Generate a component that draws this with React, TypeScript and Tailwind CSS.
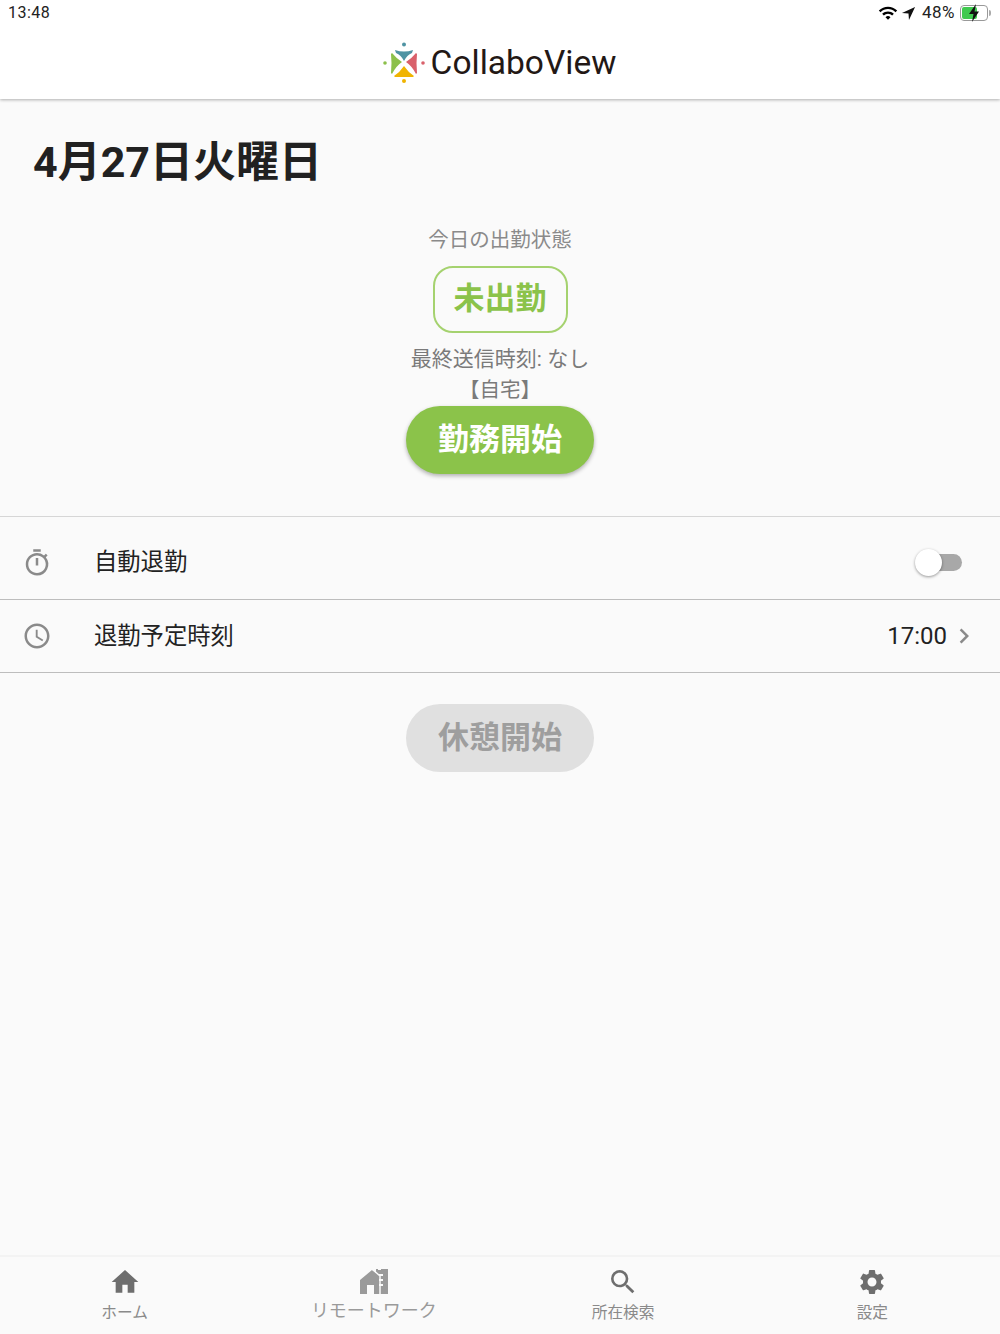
import { MdAccessTime, MdChevronRight, MdHome, MdOutlineTimer, MdSearch, MdSettings, MdWifi } from 'react-icons/md';
import type { ReactNode } from 'react';

const font = { fontFamily: 'Roboto, "Noto Sans CJK JP", sans-serif' };

function Logo() {
  return (
    <svg width="44" height="44" viewBox="0 0 44 44">
      <circle cx="22" cy="3.5" r="2" fill="#4f93a3" />
      <path d="M13 9 Q22 12 31 9 L30 12 Q25 14 22 20 Q19 14 14 12 Z" fill="#4f93a3" />
      <circle cx="3" cy="22" r="1.8" fill="#8cc04b" />
      <path d="M10 12 Q14 17 20 21 Q14 25 10 33 L9 32 Q10 22 9 13 Z" fill="#8cc04b" />
      <circle cx="41" cy="22" r="1.8" fill="#d9616b" />
      <path d="M34 12 Q30 17 24 21 Q30 25 34 33 L35 32 Q34 22 35 13 Z" fill="#d9616b" />
      <circle cx="22" cy="40" r="2" fill="#f0b400" />
      <path d="M22 25 Q26 31 32 35 L31 36 L13 36 L12 35 Q18 31 22 25 Z" fill="#f0b400" />
    </svg>
  );
}

function StatusBar() {
  return (
    <div className="flex h-[26px] items-center justify-between pl-2 pr-[9px] text-[16px] text-[#222]">
      <span className="tracking-[0.5px]">13:48</span>
      <div className="flex items-center">
        <MdWifi size={20} className="text-black" />
        <svg width="15" height="15" viewBox="0 0 16 16" className="ml-[3px]">
          <path d="M15 1 L1 7.5 L8 8 L8.5 15 Z" fill="#111" />
        </svg>
        <span className="ml-[6px] text-[17px] tracking-[0.5px]">48%</span>
        <div className="relative ml-[5px] h-[16px] w-[28px] rounded-[4px] border border-[#999] p-[1px]">
          <div className="h-full w-[15px] rounded-[2px] bg-[#3fc94f]" />
          <svg width="14" height="18" viewBox="0 0 14 18" className="absolute left-[6px] top-[-2px]">
            <path d="M9 0 L2 10 L6.5 10 L5 18 L12 7.5 L7.5 7.5 Z" fill="#111" />
          </svg>
        </div>
        <div className="ml-[1px] h-[6px] w-[2px] rounded-r-sm bg-[#aaa]" />
      </div>
    </div>
  );
}

function Row({ icon, label, children, last }: { icon: ReactNode; label: string; children?: ReactNode; last?: boolean }) {
  return (
    <div className={`flex items-center border-b border-[#bdbdbd] pl-[22px] ${last ? 'h-[73px]' : 'h-[83px] pt-[9px]'}`}>
      <div className="flex w-[72px] text-[#8a8a8a]">{icon}</div>
      <span className="text-[23.3px] text-[#222]">{label}</span>
      <div className="ml-auto flex items-center">{children}</div>
    </div>
  );
}

function NavItem({ icon, label }: { icon: ReactNode; label: string }) {
  return (
    <div className="flex flex-col items-center pt-[10px]">
      <div className="flex h-[30px] items-center text-[#6e6e6e]">{icon}</div>
      <span className="mt-[5px] text-[15.7px] leading-[22px] text-[#8a8a8a]">{label}</span>
    </div>
  );
}

export default function App() {
  return (
    <div style={font} className="flex h-[1334px] w-[1000px] flex-col bg-[#fafafa]">
      <header className="relative z-10 h-[99px] bg-white shadow-[0_1px_3px_rgba(0,0,0,0.3)]">
        <StatusBar />
        <div className="flex h-[73px] items-center justify-center pr-[2px]">
          <Logo />
          <span className="ml-[5px] text-[33.5px] leading-[74px] text-[#231815]">CollaboView</span>
        </div>
      </header>

      <main className="flex-1">
        <h1 className="pl-[33px] pt-[37px] text-[43px] font-bold leading-[52px] text-[#212121]">4月27日火曜日</h1>

        <div className="flex flex-col items-center pt-[37px]">
          <p className="text-[20.5px] leading-[30px] text-[#8a8a8a]">今日の出勤状態</p>
          <div className="mt-[11px] flex h-[67px] w-[135px] items-center justify-center rounded-[20px] border-2 border-[#a5d26f] text-[31px] font-bold text-[#8bc34a]">
            未出勤
          </div>
          <p className="mt-[11px] text-[21px] leading-[30px] text-[#7a7a7a]">最終送信時刻: なし</p>
          <p className="mt-[1px] text-[20.5px] leading-[30px] text-[#7a7a7a]">【自宅】</p>
          <div className="mt-[1px] flex h-[68px] w-[188px] items-center justify-center rounded-full bg-[#8bc34a] text-[31px] font-bold text-white shadow-[0_2px_4px_rgba(0,0,0,0.3)]">
            勤務開始
          </div>
        </div>

        <div className="mt-[42px] border-t border-[#d6d6d6]">
          <Row icon={<MdOutlineTimer size={30} />} label="自動退勤">
            <div className="relative mr-[38px] h-[17px] w-[40px] rounded-full bg-[#a8a8a8]">
              <div className="absolute left-[-7px] top-[-5px] h-[27px] w-[27px] rounded-full bg-white shadow-[0_1px_3px_rgba(0,0,0,0.4)]" />
            </div>
          </Row>
          <Row icon={<MdAccessTime size={30} />} label="退勤予定時刻" last>
            <span className="text-[24px] text-[#222]">17:00</span>
            <MdChevronRight size={30} className="ml-[2px] mr-[21px] text-[#8a8a8a]" />
          </Row>
        </div>

        <div className="flex justify-center pt-[31px]">
          <div className="flex h-[68px] w-[188px] items-center justify-center rounded-full bg-[#e0e0e0] text-[31px] font-bold text-[#9e9e9e]">
            休憩開始
          </div>
        </div>
      </main>

      <nav className="grid h-[79px] grid-cols-4 border-t-2 border-[#f3f3f3] pr-[3px]">
        <NavItem icon={<MdHome size={32} />} label="ホーム" />
        <div className="flex flex-col items-center pt-[10px] text-[#9a9a9a]">
          <svg width="30" height="30" viewBox="0 0 30 30">
            <path d="M1 13 L13 3 L17 6 L17 2 L29 2 L29 27 L1 27 Z M8 27 L8 18 L15 18 L15 27 Z" fill="currentColor" fillRule="evenodd" />
            <path d="M19 2 L22 2 M20 8 H24 M20 13 H24 M20 18 H24" stroke="#fafafa" strokeWidth="2" />
            <path d="M12 1 L21 9 L21 28" stroke="#fafafa" strokeWidth="1.5" fill="none" />
          </svg>
          <span className="mt-[2px] text-[18px] leading-[24px]">リモートワーク</span>
        </div>
        <NavItem icon={<MdSearch size={32} />} label="所在検索" />
        <NavItem icon={<MdSettings size={30} />} label="設定" />
      </nav>
    </div>
  );
}
